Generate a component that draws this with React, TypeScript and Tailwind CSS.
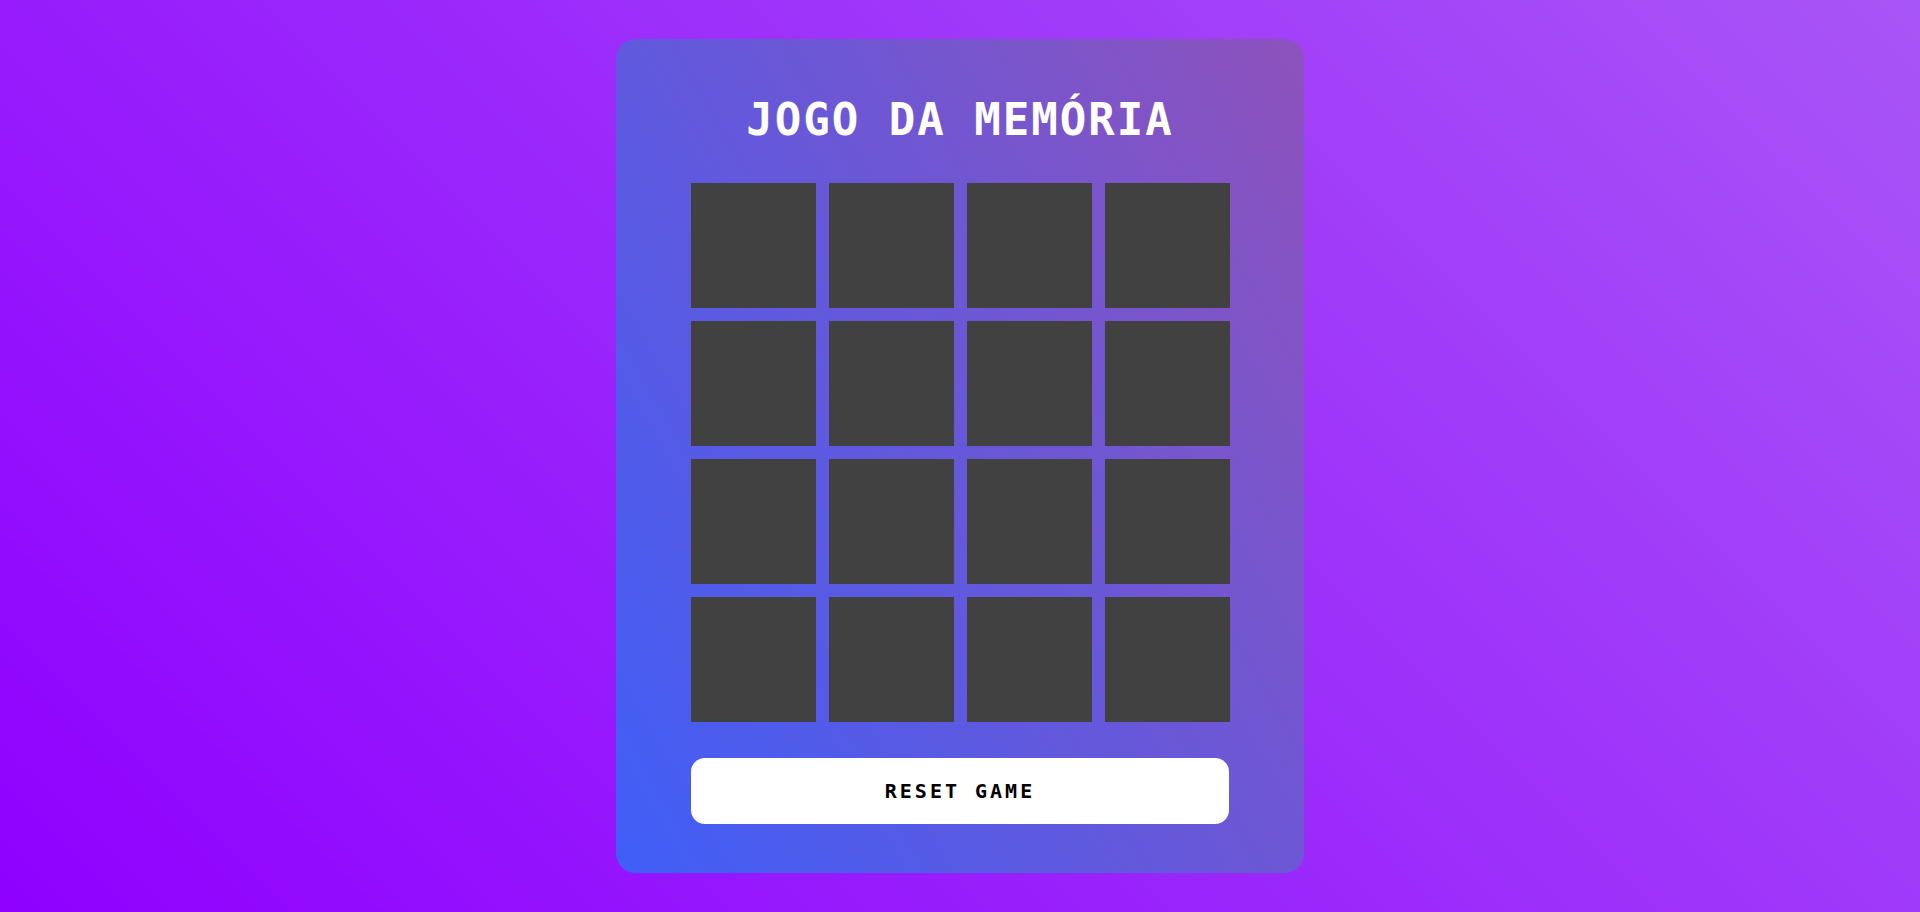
const cards = Array.from({ length: 16 }, (_, i) => i);

const App = () => {
  return (
    <div className="min-h-screen w-full flex items-center justify-center bg-[linear-gradient(45deg,#8f00ff,#a855f7)] font-['DejaVu_Sans_Mono',monospace]">
      {/* Game card */}
      <div className="w-[688px] rounded-[20px] bg-[linear-gradient(60deg,#3f5ef7,#8e52bc)] pt-[55px] pb-[49px] flex flex-col items-center">
        <h1 className="text-[44px] leading-[51px] font-bold text-white tracking-[2px] mb-[38px]">
          JOGO DA MEMÓRIA
        </h1>

        {/* Board */}
        <div className="grid grid-cols-[repeat(4,125px)] gap-[13px]">
          {cards.map((c) => (
            <div key={c} className="w-[125px] h-[125px] bg-[#414141]"></div>
          ))}
        </div>

        {/* Reset */}
        <button className="mt-[36px] w-[538px] h-[66px] rounded-[14px] bg-white text-black text-[20px] font-bold tracking-[3px] flex items-center justify-center">
          RESET GAME
        </button>
      </div>
    </div>
  );
};

export default App;
